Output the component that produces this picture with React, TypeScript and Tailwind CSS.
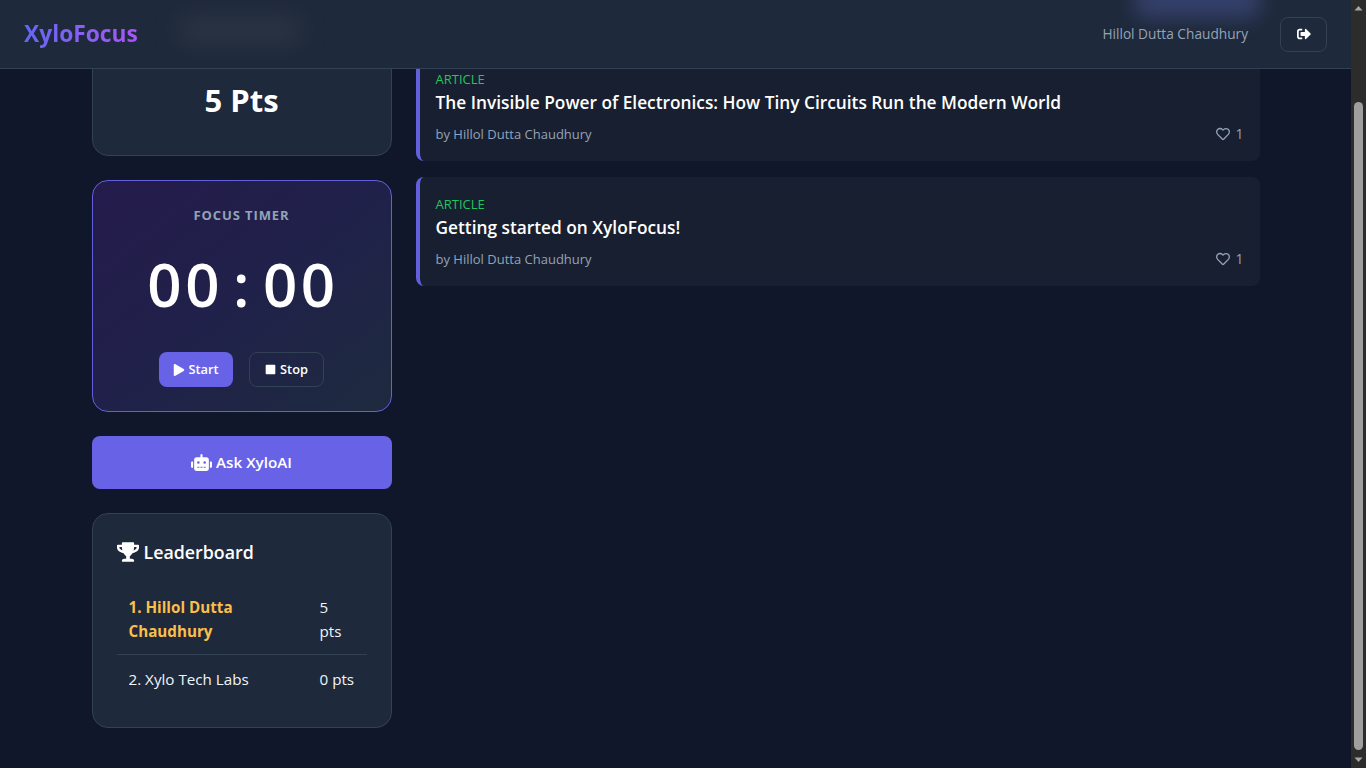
import { FaRobot, FaTrophy, FaPlay, FaStop, FaSignOutAlt, FaRegHeart } from 'react-icons/fa';

const POSTS = [
  'The Invisible Power of Electronics: How Tiny Circuits Run the Modern World',
  'Getting started on XyloFocus!',
];

function PostCard({ title }: { title: string }) {
  return (
    <div className="h-[109px] rounded-lg border-l-4 border-[#6360dc] bg-[#181f30] pl-[16px] pr-4 pt-[18px]">
      <div className="text-[13px] leading-[18px] text-[#22c55e]">ARTICLE</div>
      <h3 className="mt-[1px] text-[17.3px] font-semibold leading-[28px] text-white">{title}</h3>
      <div className="mt-[7px] flex items-center justify-between text-[13px] leading-[18px] text-[#94a3b8]">
        <span>by Hillol Dutta Chaudhury</span>
        <span className="flex items-center gap-[5px] text-sm">
          <FaRegHeart className="h-[14px] w-[14px]" />1
        </span>
      </div>
    </div>
  );
}

export default function App() {
  return (
    <div className="flex h-[768px] w-full overflow-hidden bg-[#10172a] font-['Open_Sans','Noto_Sans',sans-serif]">
      <div className="relative h-full min-w-0 flex-1 overflow-hidden">
        {/* Sticky nav, blurred things behind it are the scrolled page */}
        <header className="relative z-10 flex h-[69px] items-center justify-between overflow-hidden border-b border-[#334155] bg-[#1e293b] pl-6 pr-6">
          <div className="absolute left-[178px] top-[16px] h-[28px] w-[124px] rounded-full bg-[#3a3f4b] opacity-50 blur-[12px]" />
          <div className="absolute left-[1135px] top-[-18px] h-[36px] w-[125px] rounded-lg bg-[#3f4a80] opacity-70 blur-[10px]" />
          <div className="relative bg-gradient-to-r from-[#6366f1] to-[#a855f7] bg-clip-text text-[22.8px] font-bold text-transparent">
            XyloFocus
          </div>
          <div className="relative flex items-center gap-8">
            <span className="text-[13.7px] text-[#94a3b8]">Hillol Dutta Chaudhury</span>
            <button className="flex h-[35px] w-[47px] items-center justify-center rounded-lg border border-[#334155] text-white">
              <FaSignOutAlt className="h-[14px] w-[14px]" />
            </button>
          </div>
        </header>

        <main className="mx-auto -mt-[60px] flex w-[1168px] gap-6">
          {/* Left column */}
          <div className="flex w-[300px] shrink-0 flex-col gap-6">
            <div className="flex h-[147px] items-end justify-center rounded-2xl border border-[#334155] bg-[#1e293b] pb-[31px]">
              <span className="text-[31px] font-bold leading-[48px] text-white">5 Pts</span>
            </div>

            <div className="flex h-[232px] flex-col items-center rounded-2xl border border-[#6360dc] bg-gradient-to-br from-[#241b4b] via-[#20214a] to-[#1e2a3e] pt-6">
              <div className="text-[13px] font-bold leading-5 tracking-[0.9px] text-[#94a3b8]">FOCUS TIMER</div>
              <div className="mt-[21px] pl-[3px] text-[60px] font-semibold leading-[76px] tracking-[3.5px] text-white [word-spacing:-9px]">00 : 00</div>
              <div className="mt-[30px] flex gap-4">
                <button className="flex h-[35px] w-[74px] items-center justify-center gap-[3px] rounded-lg bg-[#6863e6] text-[12.8px] font-semibold text-white">
                  <FaPlay className="h-[12px] w-[12px]" /> Start
                </button>
                <button className="flex h-[35px] w-[75px] items-center justify-center gap-1 rounded-lg border border-[#334155] text-[12.8px] font-semibold text-white">
                  <FaStop className="h-[11px] w-[11px]" /> Stop
                </button>
              </div>
            </div>

            <button className="flex h-[53px] items-center justify-center gap-[4px] rounded-lg bg-[#6863e6] text-[15.2px] font-semibold text-white">
              <FaRobot className="h-[17px] w-[21px]" /> Ask XyloAI
            </button>

            <div className="h-[215px] rounded-2xl border border-[#334155] bg-[#1e293b] px-6 pt-6">
              <h3 className="flex items-center gap-[5px] text-[17.8px] font-semibold leading-[28px] text-white">
                <FaTrophy className="h-[20px] w-[22px]" /> Leaderboard
              </h3>
              <table className="mt-[17px] w-full text-[15.2px] leading-6 text-[#f1f5f9]">
                <tbody>
                  <tr className="border-b border-[#334155]">
                    <td className="px-3 pb-[11px] pt-3 font-bold text-[#fbbf4a]">1. Hillol Dutta Chaudhury</td>
                    <td className="w-[59px] pb-[11px] pl-3 pt-3">
                      5<br />pts
                    </td>
                  </tr>
                  <tr>
                    <td className="px-3 py-3">2. Xylo Tech Labs</td>
                    <td className="w-[59px] whitespace-nowrap py-3 pl-3">0 pts</td>
                  </tr>
                </tbody>
              </table>
            </div>
          </div>

          {/* Right column */}
          <div className="flex min-w-0 flex-1 flex-col gap-4 pt-[43px]">
            {POSTS.map((title) => (
              <PostCard key={title} title={title} />
            ))}
          </div>
        </main>
      </div>

      {/* Scrollbar */}
      <div className="flex h-full w-[15px] shrink-0 flex-col items-center bg-[#2c2c2c]">
        <svg width="15" height="17" viewBox="0 0 15 17" className="shrink-0">
          <path d="M3.5 10.5 L7.5 6 L11.5 10.5 Z" fill="#a6a6a6" />
        </svg>
        <div className="mt-[85px] h-[648px] w-[9px] shrink-0 rounded-full bg-[#9f9f9f]" />
        <svg width="15" height="17" viewBox="0 0 15 17" className="mt-auto shrink-0">
          <path d="M3.5 6.5 L7.5 11 L11.5 6.5 Z" fill="#a6a6a6" />
        </svg>
      </div>
    </div>
  );
}
